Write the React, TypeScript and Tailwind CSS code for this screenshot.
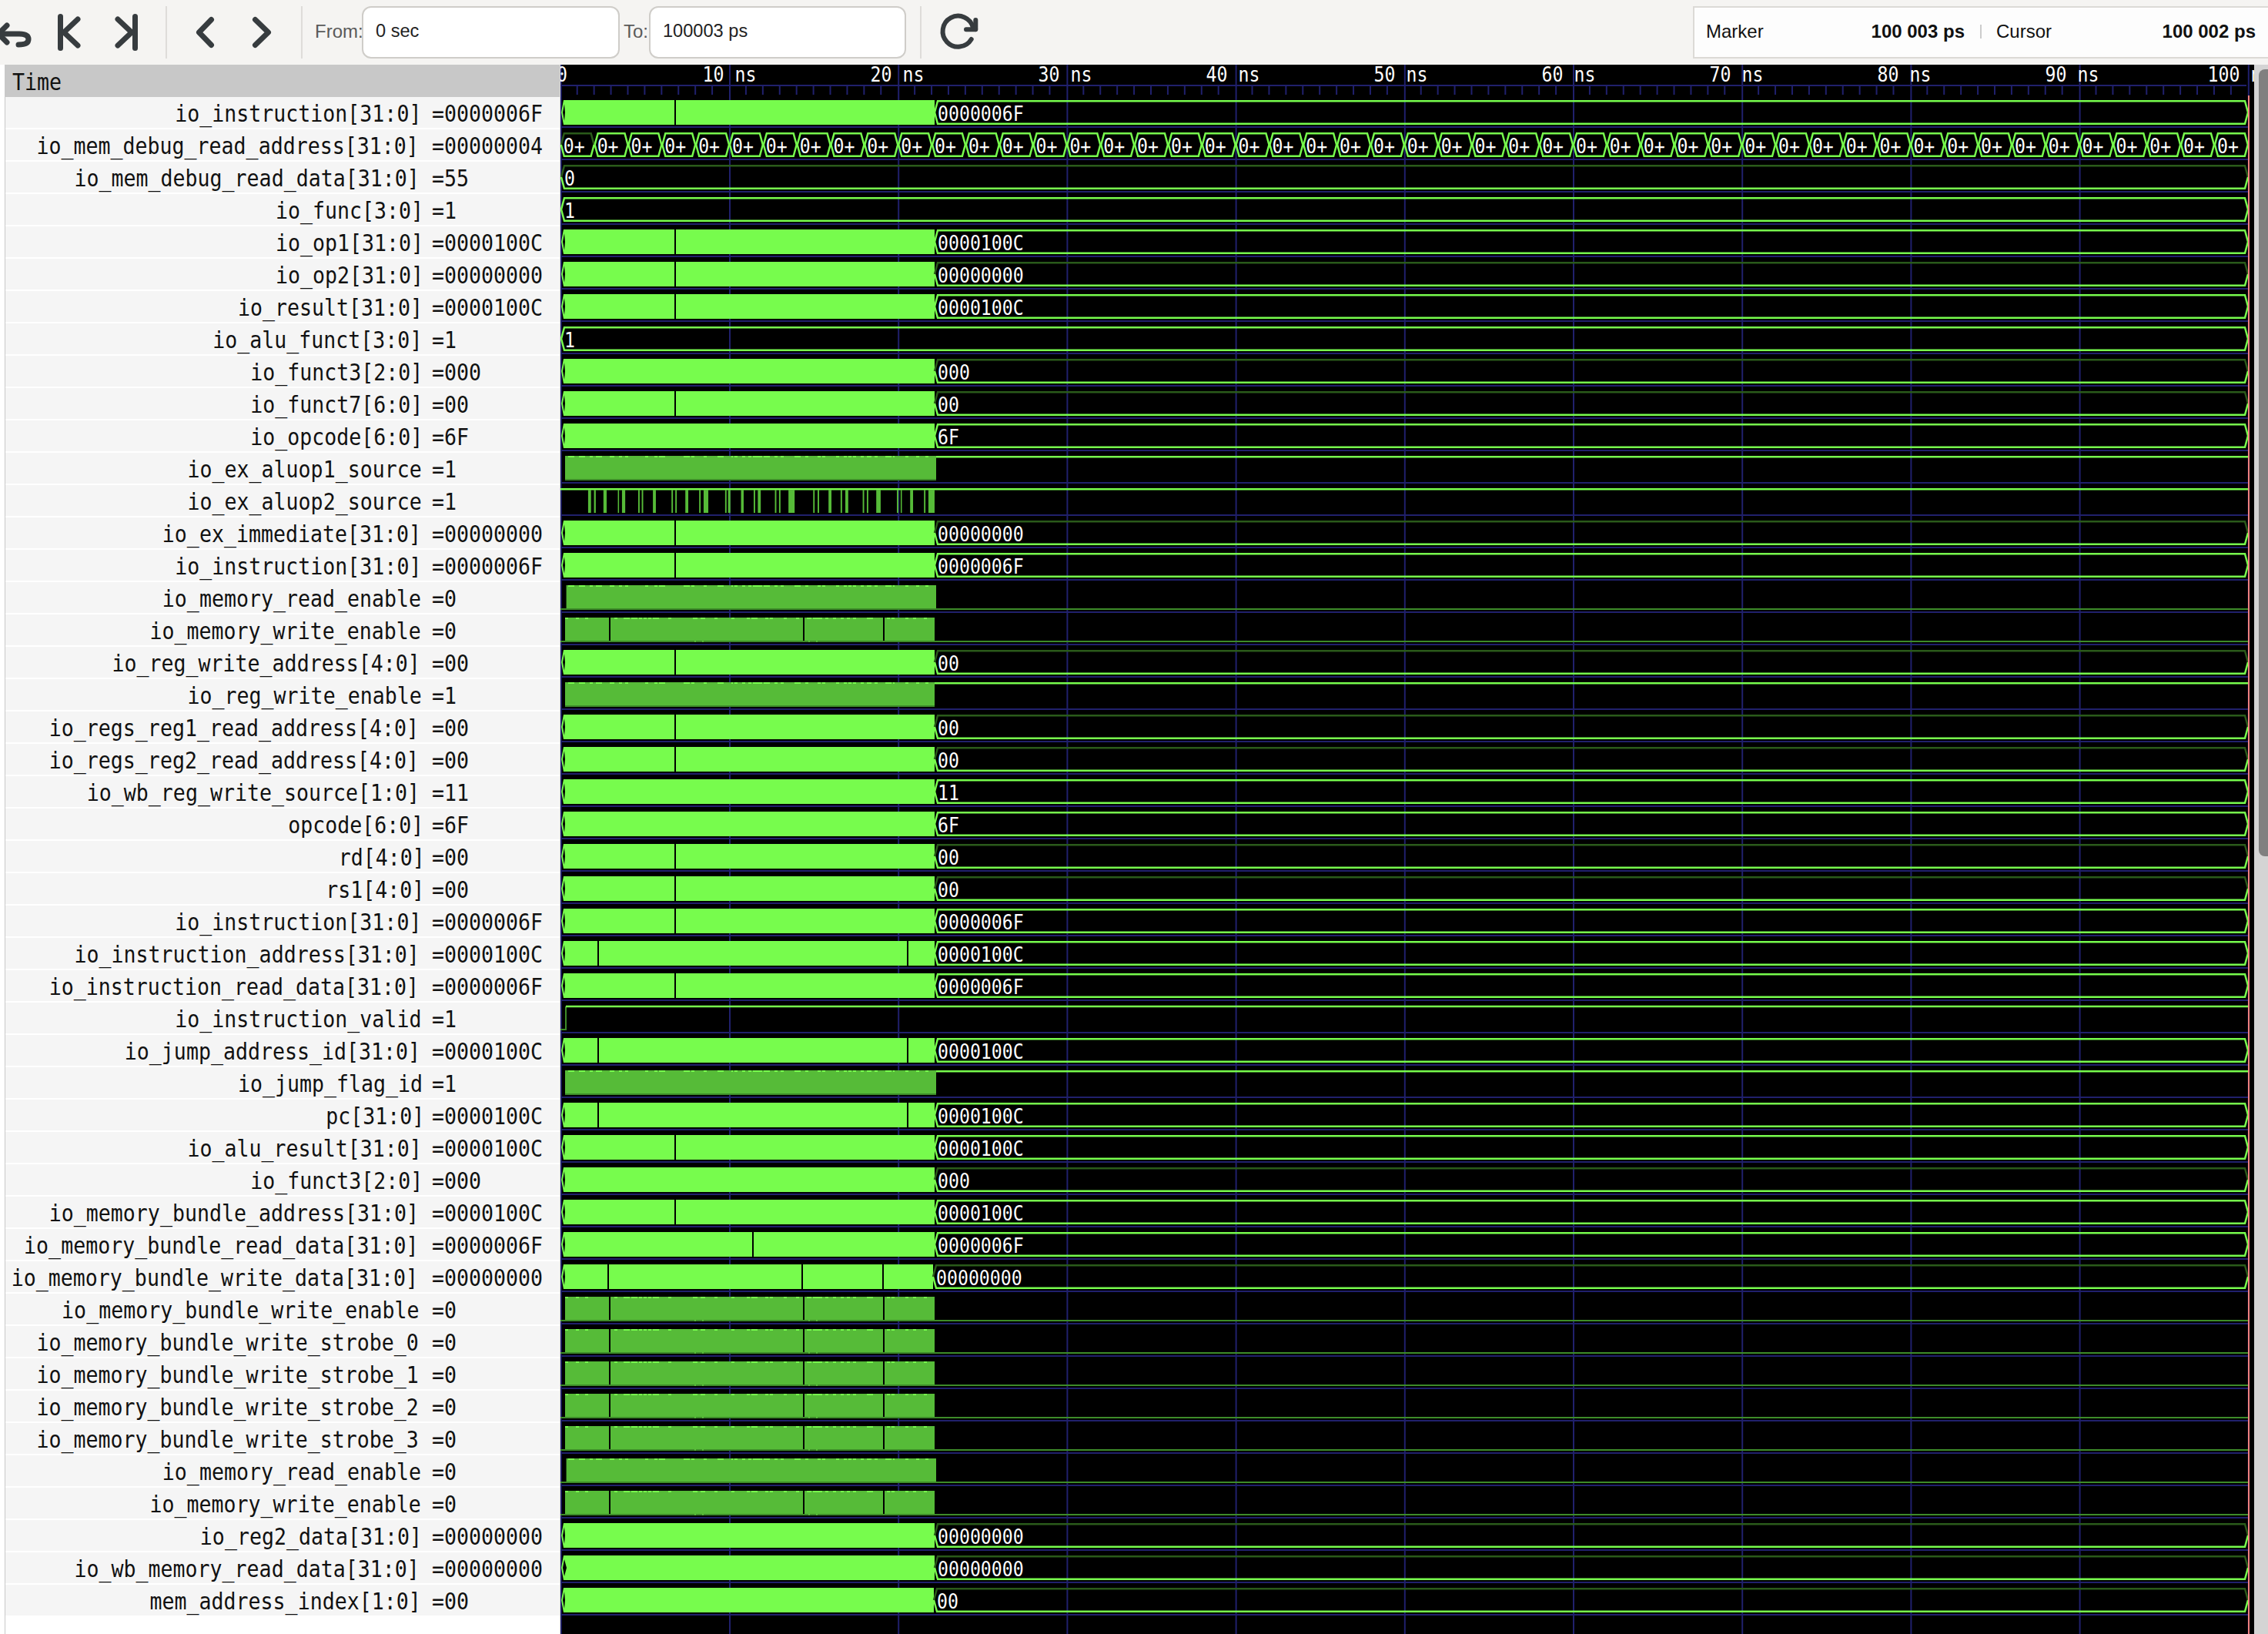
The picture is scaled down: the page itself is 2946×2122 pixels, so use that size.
import React from 'react';

const X0 = 727.8;
const NS = 21.92;
const ROW = 42;
const END = 2920;

const BRIGHT = '#77fc4d';
const DARK_FILL = '#56bb38';
const LOW_LINE = '#3d8b29';
const DIM = '#2a5a1a';
const NAVY = '#20206c';

const A = [876];
const B = [776, 1178];
const C = [791, 1043, 1147];

// top edge glitches, in pixels of a 3x crop starting at x=726
const DASH_HIGH = [
  [36, 60], [78, 102], [120, 132], [144, 168], [198, 216], [234, 246], [258, 270], [336, 348], [372, 384], [390, 414],
  [486, 510], [516, 528], [564, 576], [618, 642], [672, 678], [684, 696], [714, 726], [738, 750], [756, 792], [798, 822],
  [840, 852], [864, 876], [918, 942], [960, 972], [1008, 1020], [1026, 1038], [1080, 1092], [1110, 1122], [1128, 1140],
  [1146, 1158], [1176, 1188], [1200, 1218], [1230, 1242], [1272, 1296], [1302, 1308], [1350, 1362], [1392, 1404], [1428, 1440],
];
const DASH_WRITE = [
  [24, 36], [66, 78], [102, 114], [216, 228], [252, 276], [282, 306], [312, 324], [330, 342], [348, 360], [366, 390],
  [426, 438], [522, 540], [552, 570], [606, 618], [672, 684], [732, 744], [750, 774], [804, 816], [822, 834], [876, 888],
  [924, 936], [966, 984], [990, 1026], [1038, 1050], [1068, 1080], [1098, 1110], [1122, 1134], [1146, 1158], [1200, 1224],
  [1278, 1290], [1296, 1308], [1350, 1362], [1380, 1392], [1422, 1434],
];
const PULSES = [
  [167, 177], [187, 193], [219, 230], [268, 272], [282, 293], [337, 342], [349, 354], [387, 397], [450, 455], [463, 468],
  [497, 507], [544, 549], [559, 575], [632, 637], [642, 650], [686, 695], [729, 734], [743, 753], [801, 806], [815, 820],
  [847, 868], [931, 936], [946, 951], [983, 993], [1024, 1029], [1040, 1050], [1099, 1104], [1113, 1118], [1145, 1160],
  [1215, 1220], [1228, 1232], [1260, 1270], [1307, 1312], [1322, 1343],
];

type Wave =
  | { kind: 'bus'; breaks: number[]; start?: number; end?: number }
  | { kind: 'full'; text: string }
  | { kind: 'cells' }
  | { kind: 'bit'; high: boolean; start: number; end: number; breaks: number[]; dashes: number[][] }
  | { kind: 'pulses' }
  | { kind: 'valid' };

const bus = (breaks: number[] = [], end = 1214, start = 734): Wave => ({ kind: 'bus', breaks, end, start });
const readEn: Wave = { kind: 'bit', high: false, start: 735.6, end: 1216, breaks: [], dashes: DASH_HIGH };
const writeEn: Wave = { kind: 'bit', high: false, start: 734, end: 1214, breaks: C, dashes: DASH_WRITE };
const highBit = (end: number): Wave => ({ kind: 'bit', high: true, start: 734, end, breaks: [], dashes: DASH_HIGH });

const signals: { name: string; value: string; wave: Wave }[] = [
  { name: 'io_instruction[31:0]', value: '=0000006F', wave: bus(A) },
  { name: 'io_mem_debug_read_address[31:0]', value: '=00000004', wave: { kind: 'cells' } },
  { name: 'io_mem_debug_read_data[31:0]', value: '=55', wave: { kind: 'full', text: '0' } },
  { name: 'io_func[3:0]', value: '=1', wave: { kind: 'full', text: '1' } },
  { name: 'io_op1[31:0]', value: '=0000100C', wave: bus(A) },
  { name: 'io_op2[31:0]', value: '=00000000', wave: bus(A) },
  { name: 'io_result[31:0]', value: '=0000100C', wave: bus(A) },
  { name: 'io_alu_funct[3:0]', value: '=1', wave: { kind: 'full', text: '1' } },
  { name: 'io_funct3[2:0]', value: '=000', wave: bus() },
  { name: 'io_funct7[6:0]', value: '=00', wave: bus(A) },
  { name: 'io_opcode[6:0]', value: '=6F', wave: bus() },
  { name: 'io_ex_aluop1_source', value: '=1', wave: highBit(1216) },
  { name: 'io_ex_aluop2_source', value: '=1', wave: { kind: 'pulses' } },
  { name: 'io_ex_immediate[31:0]', value: '=00000000', wave: bus(A) },
  { name: 'io_instruction[31:0]', value: '=0000006F', wave: bus(A) },
  { name: 'io_memory_read_enable', value: '=0', wave: readEn },
  { name: 'io_memory_write_enable', value: '=0', wave: writeEn },
  { name: 'io_reg_write_address[4:0]', value: '=00', wave: bus(A) },
  { name: 'io_reg_write_enable', value: '=1', wave: highBit(1214) },
  { name: 'io_regs_reg1_read_address[4:0]', value: '=00', wave: bus(A) },
  { name: 'io_regs_reg2_read_address[4:0]', value: '=00', wave: bus(A) },
  { name: 'io_wb_reg_write_source[1:0]', value: '=11', wave: bus() },
  { name: 'opcode[6:0]', value: '=6F', wave: bus() },
  { name: 'rd[4:0]', value: '=00', wave: bus(A) },
  { name: 'rs1[4:0]', value: '=00', wave: bus(A) },
  { name: 'io_instruction[31:0]', value: '=0000006F', wave: bus(A) },
  { name: 'io_instruction_address[31:0]', value: '=0000100C', wave: bus(B) },
  { name: 'io_instruction_read_data[31:0]', value: '=0000006F', wave: bus(A) },
  { name: 'io_instruction_valid', value: '=1', wave: { kind: 'valid' } },
  { name: 'io_jump_address_id[31:0]', value: '=0000100C', wave: bus(B) },
  { name: 'io_jump_flag_id', value: '=1', wave: highBit(1216) },
  { name: 'pc[31:0]', value: '=0000100C', wave: bus(B) },
  { name: 'io_alu_result[31:0]', value: '=0000100C', wave: bus(A) },
  { name: 'io_funct3[2:0]', value: '=000', wave: bus() },
  { name: 'io_memory_bundle_address[31:0]', value: '=0000100C', wave: bus(A) },
  { name: 'io_memory_bundle_read_data[31:0]', value: '=0000006F', wave: bus([977]) },
  { name: 'io_memory_bundle_write_data[31:0]', value: '=00000000', wave: bus([789, 1041, 1146], 1212) },
  { name: 'io_memory_bundle_write_enable', value: '=0', wave: writeEn },
  { name: 'io_memory_bundle_write_strobe_0', value: '=0', wave: writeEn },
  { name: 'io_memory_bundle_write_strobe_1', value: '=0', wave: writeEn },
  { name: 'io_memory_bundle_write_strobe_2', value: '=0', wave: writeEn },
  { name: 'io_memory_bundle_write_strobe_3', value: '=0', wave: writeEn },
  { name: 'io_memory_read_enable', value: '=0', wave: readEn },
  { name: 'io_memory_write_enable', value: '=0', wave: writeEn },
  { name: 'io_reg2_data[31:0]', value: '=00000000', wave: bus() },
  { name: 'io_wb_memory_read_data[31:0]', value: '=00000000', wave: bus([], 1214, 736) },
  { name: 'mem_address_index[1:0]', value: '=00', wave: bus([], 1213) },
];

const crop = (z: number) => 726 + z / 3;
const isZero = (s: string) => /^0+$/.test(s);

const WaveText: React.FC<{ x: number; y: number; anchor?: 'start' | 'middle'; children: React.ReactNode }> = ({ x, y, anchor = 'start', children }) => (
  <text
    transform={`translate(${x} ${y}) scale(1 1.12)`}
    textAnchor={anchor}
    className="fill-white font-['DejaVu_Sans_Mono',monospace] text-[23.2px]"
  >
    {children}
  </text>
);

// hexagon outline of a bus value, the top edge may be dim when all bits are 0
const BusOutline: React.FC<{ x0: number; x1: number; top: number; bot: number; dim: boolean }> = ({ x0, x1, top, bot, dim }) => {
  const mid = (top + bot) / 2;
  return (
    <g fill="none" strokeWidth={2.5}>
      <path d={`M${x0} ${mid}L${x0 + 4} ${top + 1.25}H${x1 - 4}L${x1} ${mid}`} stroke={dim ? DIM : BRIGHT} />
      <path d={`M${x0} ${mid}L${x0 + 4} ${bot - 1.25}H${x1 - 4}L${x1} ${mid}`} stroke={BRIGHT} />
    </g>
  );
};

const Trace: React.FC<{ index: number; value: string; wave: Wave }> = ({ index, value, wave }) => {
  const top = 130 + ROW * index;
  const bot = top + 32;
  const mid = top + 16;

  if (wave.kind === 'bus') {
    const start = wave.start ?? 734;
    const end = wave.end ?? 1214;
    const text = value.slice(1);
    return (
      <g>
        <polygon points={`729,${mid} 732,${top} ${start + 1},${top} ${start + 1},${bot} 732,${bot}`} fill={BRIGHT} />
        <polygon points={`731,${mid} 733,${mid - 11} ${start},${mid} 733,${mid + 11}`} fill="#000" />
        <rect x={start} y={top} width={end - start} height={32} fill={BRIGHT} />
        {wave.breaks.map((b) => (
          <rect key={b} x={b} y={top} width={2} height={32} fill="#000" />
        ))}
        <BusOutline x0={end} x1={END} top={top} bot={bot} dim={isZero(text)} />
        <WaveText x={end + 4} y={top + 27}>{text}</WaveText>
      </g>
    );
  }

  if (wave.kind === 'full') {
    return (
      <g>
        <BusOutline x0={729} x1={END} top={top} bot={bot} dim={isZero(wave.text)} />
        <WaveText x={733} y={top + 27}>{wave.text}</WaveText>
      </g>
    );
  }

  if (wave.kind === 'cells') {
    const step = NS * 2;
    return (
      <g>
        {Array.from({ length: 50 }, (_, k) => {
          const x = X0 + step * k;
          return (
            <g key={k}>
              <BusOutline x0={x + 1} x1={x + step} top={top} bot={bot} dim={k === 0} />
              <WaveText x={x + 4} y={top + 27}>0+</WaveText>
            </g>
          );
        })}
      </g>
    );
  }

  if (wave.kind === 'pulses') {
    return (
      <g>
        <rect x={728} y={top} width={END - 728} height={2.5} fill={BRIGHT} />
        {PULSES.map(([a, b]) => (
          <rect key={a} x={700 + a / 2.613} y={top + 2} width={(b - a) / 2.613} height={30} fill={DARK_FILL} />
        ))}
      </g>
    );
  }

  if (wave.kind === 'valid') {
    return (
      <g fill="none" strokeWidth={2}>
        <path d={`M728 ${bot - 1}H735V${top + 1}`} stroke={LOW_LINE} />
        <path d={`M735 ${top + 1}H${END}`} stroke={BRIGHT} strokeWidth={2.5} />
      </g>
    );
  }

  return (
    <g>
      {wave.high ? (
        <rect x={wave.end} y={top} width={END - wave.end} height={2.5} fill={BRIGHT} />
      ) : (
        <rect x={728} y={bot - 2} width={END - 728} height={2} fill={LOW_LINE} />
      )}
      <rect x={wave.start} y={top} width={wave.end - wave.start} height={30} fill={DARK_FILL} />
      {wave.high && <rect x={wave.start} y={bot - 2} width={wave.end - wave.start} height={2} fill={LOW_LINE} />}
      {wave.dashes
        .filter(([a]) => crop(a) >= wave.start)
        .map(([a, b]) => (
          <rect key={a} x={crop(a)} y={top} width={(b - a) / 3} height={2} fill={BRIGHT} />
        ))}
      {wave.breaks.map((b) => (
        <rect key={b} x={b} y={top} width={2} height={30} fill="#000" />
      ))}
      {wave.breaks.length > 0 &&
        [528, 558, 972, 1002].map((z) => <rect key={z} x={crop(z)} y={bot - 2} width={2} height={2} fill={DARK_FILL} />)}
    </g>
  );
};

const WaveCanvas: React.FC = () => (
  <svg viewBox="728 84 2200 2038" className="h-[2038px] w-[2200px] shrink-0 bg-black">
    {Array.from({ length: 101 }, (_, j) =>
      j % 10 === 0 ? null : <rect key={j} x={X0 + NS * j - 1} y={111} width={2} height={12} fill={NAVY} />
    )}
    {Array.from({ length: 11 }, (_, k) => (
      <rect key={k} x={X0 + NS * 10 * k} y={84} width={2} height={2038} fill={NAVY} />
    ))}
    <rect x={728} y={110} width={2190} height={2} fill={NAVY} />
    {signals.map((_, i) => (
      <rect key={i} x={728} y={164 + ROW * i} width={END - 728} height={2} fill={NAVY} />
    ))}
    <WaveText x={730} y={106} anchor="middle">0</WaveText>
    {Array.from({ length: 10 }, (_, k) => (
      <WaveText key={k} x={947.5 + 218 * k} y={106} anchor="middle">{`${(k + 1) * 10} ns`}</WaveText>
    ))}
    {signals.map((s, i) => (
      <Trace key={i} index={i} value={s.value} wave={s.wave} />
    ))}
    <rect x={2920} y={124} width={2} height={1998} fill="#f08080" />
  </svg>
);

const SignalRow: React.FC<{ name: string; value: string }> = ({ name, value }) => (
  <div className="flex h-[40px] shrink-0 items-center bg-[#f5f5f5] pt-[4px] text-[26.6px] leading-none text-[#111]">
    {/* labels drift left a little as they get longer */}
    <div className="w-[547px] whitespace-nowrap text-right scale-y-[1.12]" style={{ paddingRight: name.length * 0.33 }}>
      {name}
    </div>
    <div className="ml-[7px] whitespace-nowrap scale-y-[1.12]">{value}</div>
  </div>
);

const Icon: React.FC<{ className: string; viewBox: string; children: React.ReactNode }> = ({ className, viewBox, children }) => (
  <svg
    viewBox={viewBox}
    className={className}
    fill="none"
    stroke="#373c3f"
    strokeWidth={7}
    strokeLinecap="round"
    strokeLinejoin="round"
  >
    {children}
  </svg>
);

const Separator: React.FC<{ className: string }> = ({ className }) => (
  <div className={`h-[68px] w-[2px] shrink-0 bg-[#dedcd9] ${className}`} />
);

const Field: React.FC<{ value: string; className: string }> = ({ value, className }) => (
  <div className={`flex h-[68px] shrink-0 items-center rounded-[12px] border-2 border-[#cfcdc9] bg-white pb-[3px] pl-[16px] text-[23.6px] text-[#222] ${className}`}>
    {value}
  </div>
);

const Toolbar: React.FC = () => (
  <div className="flex h-[84px] shrink-0 items-center bg-[#f5f4f2] font-['Liberation_Sans',sans-serif]">
    <Icon className="h-[84px] w-[44px] shrink-0" viewBox="0 0 44 84">
      <path d="M9 33L-2 44L9 55" />
      <path d="M-2 44H25Q37 44 37 51Q37 58 24 58" />
    </Icon>
    <Icon className="ml-[28px] h-[56px] w-[36px] shrink-0" viewBox="0 0 36 56">
      <path d="M6.5 7.5V48.5" />
      <path d="M29 11L11 28L29 45" />
    </Icon>
    <Icon className="ml-[38px] h-[56px] w-[36px] shrink-0" viewBox="0 0 36 56">
      <path d="M29.5 7.5V48.5" />
      <path d="M7 11L25 28L7 45" />
    </Icon>
    <Separator className="ml-[33px]" />
    <Icon className="ml-[35px] h-[48px] w-[32px] shrink-0" viewBox="0 0 32 48">
      <path d="M22.5 7.5L6.5 24L22.5 40.5" />
    </Icon>
    <Icon className="ml-[42px] h-[48px] w-[32px] shrink-0" viewBox="0 0 32 48">
      <path d="M5.5 7.5L22.5 24L5.5 40.5" />
    </Icon>
    <Separator className="ml-[33px]" />
    <span className="ml-[16px] w-[61px] shrink-0 pb-[3px] text-[24px] text-[#5a5a5a]">From:</span>
    <Field value="0 sec" className="w-[335px]" />
    <span className="ml-[5px] w-[33px] shrink-0 pb-[3px] text-[24px] text-[#5a5a5a]">To:</span>
    <Field value="100003 ps" className="w-[334px]" />
    <Separator className="ml-[18px]" />
    <Icon className="ml-[18px] h-[60px] w-[60px] shrink-0" viewBox="0 0 60 60">
      <path strokeWidth={6} d="M46.7 39A20 20 0 1 1 49 24L52 26" />
      <path strokeWidth={6} d="M52.3 14V26.3H40" />
    </Icon>
    <div className="ml-auto flex h-[68px] w-[747px] shrink-0 items-center border-2 border-r-0 border-[#dcdad6] bg-[#fdfdfd] pb-[3px] pl-[15px] text-[24px] text-[#111]">
      <div className="flex w-[336px] justify-between">
        <span>Marker</span>
        <span className="font-bold">100 003 ps</span>
      </div>
      <div className="ml-[20px] h-[18px] w-[2px] bg-[#cccccc]" />
      <div className="ml-[19px] flex w-[337px] justify-between">
        <span>Cursor</span>
        <span className="font-bold">100 002 ps</span>
      </div>
    </div>
  </div>
);

export default function App() {
  return (
    <div className="flex h-[2122px] w-[2946px] flex-col overflow-hidden bg-white">
      <Toolbar />
      <div className="flex min-h-0 flex-1">
        <div className="w-[728px] shrink-0 pl-[6px] font-['DejaVu_Sans_Mono',monospace]">
          <div className="flex h-full flex-col gap-[2px] border-x border-[#c8c8c8] border-r-[#d8d8d8]">
            <div className="-mb-[2px] flex h-[42px] shrink-0 items-center bg-[#c8c8c8] pl-[9px] pt-[5px] text-[26.6px] leading-none text-[#111]">
              <span className="block scale-y-[1.12]">Time</span>
            </div>
            {signals.map((s, i) => (
              <SignalRow key={i} name={s.name} value={s.value} />
            ))}
          </div>
        </div>
        <WaveCanvas />
        <div className="w-[18px] shrink-0 bg-[#d4d4d4] pl-[6px] pt-[6px]">
          <div className="h-[1022px] w-[12px] rounded-l-[8px] bg-[#808080]" />
        </div>
      </div>
    </div>
  );
}
